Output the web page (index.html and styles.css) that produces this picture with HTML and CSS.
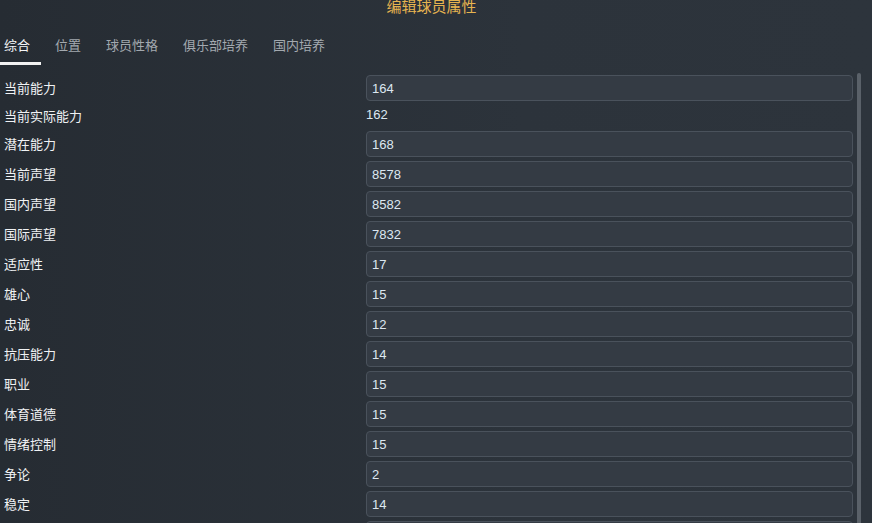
FILE: index.html
```html
<!DOCTYPE html>
<html lang="zh-CN">
<head>
  <meta charset="UTF-8">
  <meta name="viewport" content="width=device-width, initial-scale=1.0">
  <title>编辑球员属性</title>
  <link rel="stylesheet" href="styles.css">
</head>
<body>
  <div class="dialog">
    <div class="title">编辑球员属性</div>

    <div class="tabs">
      <div class="tab active">综合</div>
      <div class="tab">位置</div>
      <div class="tab">球员性格</div>
      <div class="tab">俱乐部培养</div>
      <div class="tab">国内培养</div>
    </div>

    <div class="content">
      <div class="fields">
        <div class="row"><span class="label">当前能力</span><input class="value" type="text" value="164"></div>
        <div class="row plain"><span class="label">当前实际能力</span><span class="static">162</span></div>
        <div class="row"><span class="label">潜在能力</span><input class="value" type="text" value="168"></div>
        <div class="row"><span class="label">当前声望</span><input class="value" type="text" value="8578"></div>
        <div class="row"><span class="label">国内声望</span><input class="value" type="text" value="8582"></div>
        <div class="row"><span class="label">国际声望</span><input class="value" type="text" value="7832"></div>
        <div class="row"><span class="label">适应性</span><input class="value" type="text" value="17"></div>
        <div class="row"><span class="label">雄心</span><input class="value" type="text" value="15"></div>
        <div class="row"><span class="label">忠诚</span><input class="value" type="text" value="12"></div>
        <div class="row"><span class="label">抗压能力</span><input class="value" type="text" value="14"></div>
        <div class="row"><span class="label">职业</span><input class="value" type="text" value="15"></div>
        <div class="row"><span class="label">体育道德</span><input class="value" type="text" value="15"></div>
        <div class="row"><span class="label">情绪控制</span><input class="value" type="text" value="15"></div>
        <div class="row"><span class="label">争论</span><input class="value" type="text" value="2"></div>
        <div class="row"><span class="label">稳定</span><input class="value" type="text" value="14"></div>
        <div class="row"><span class="label">依赖性</span><input class="value" type="text" value="12"></div>
      </div>
      <div class="scrollbar"></div>
    </div>
  </div>
</body>
</html>
```

FILE: styles.css
```css
body {
  margin: 0;
  height: 100vh;
  overflow: hidden;
  font-family: "Liberation Sans", "Noto Sans CJK SC", sans-serif;
  background: linear-gradient(to right, #262c33, #2c333b 60%, #2d343c);
  color: #e9ecef;
}

.dialog {
  display: flex;
  flex-direction: column;
  width: 862px;
}

.title {
  height: 37px;
  padding-left: 1px;
  text-align: center;
  font-size: 15px;
  line-height: 14px;
  color: #e6b450;
}

.tabs {
  display: flex;
  gap: 10px;
}

.tab {
  padding: 0 11px 7px 4px;
  font-size: 13px;
  line-height: 18px;
  color: #a3a9af;
  border-bottom: 3px solid transparent;
}

.tab.active {
  color: #f6f7f8;
  border-bottom-color: #f2f2f2;
}

.content {
  display: flex;
  gap: 4px;
  margin-top: 10px;
}

.fields {
  display: flex;
  flex-direction: column;
  gap: 4px;
  width: 853px;
}

.row {
  display: grid;
  grid-template-columns: 366px 1fr;
  align-items: center;
  height: 26px;
}

.row.plain {
  height: 22px;
}

.label {
  padding: 0 0 2px 4px;
  font-size: 13px;
  color: #f0f2f4;
}

.value {
  box-sizing: border-box;
  width: 100%;
  height: 26px;
  margin: 0;
  padding: 0 5px;
  font-family: inherit;
  font-size: 13px;
  color: #dde7f1;
  background: #343b44;
  border: 1px solid #4a525c;
  border-radius: 4px;
  outline: none;
}

.static {
  padding-bottom: 3px;
  font-size: 13px;
  color: #dde7f1;
}

.scrollbar {
  width: 4px;
  height: 460px;
  margin-top: -2px;
  border-radius: 2px;
  background: #5a6169;
}
```
